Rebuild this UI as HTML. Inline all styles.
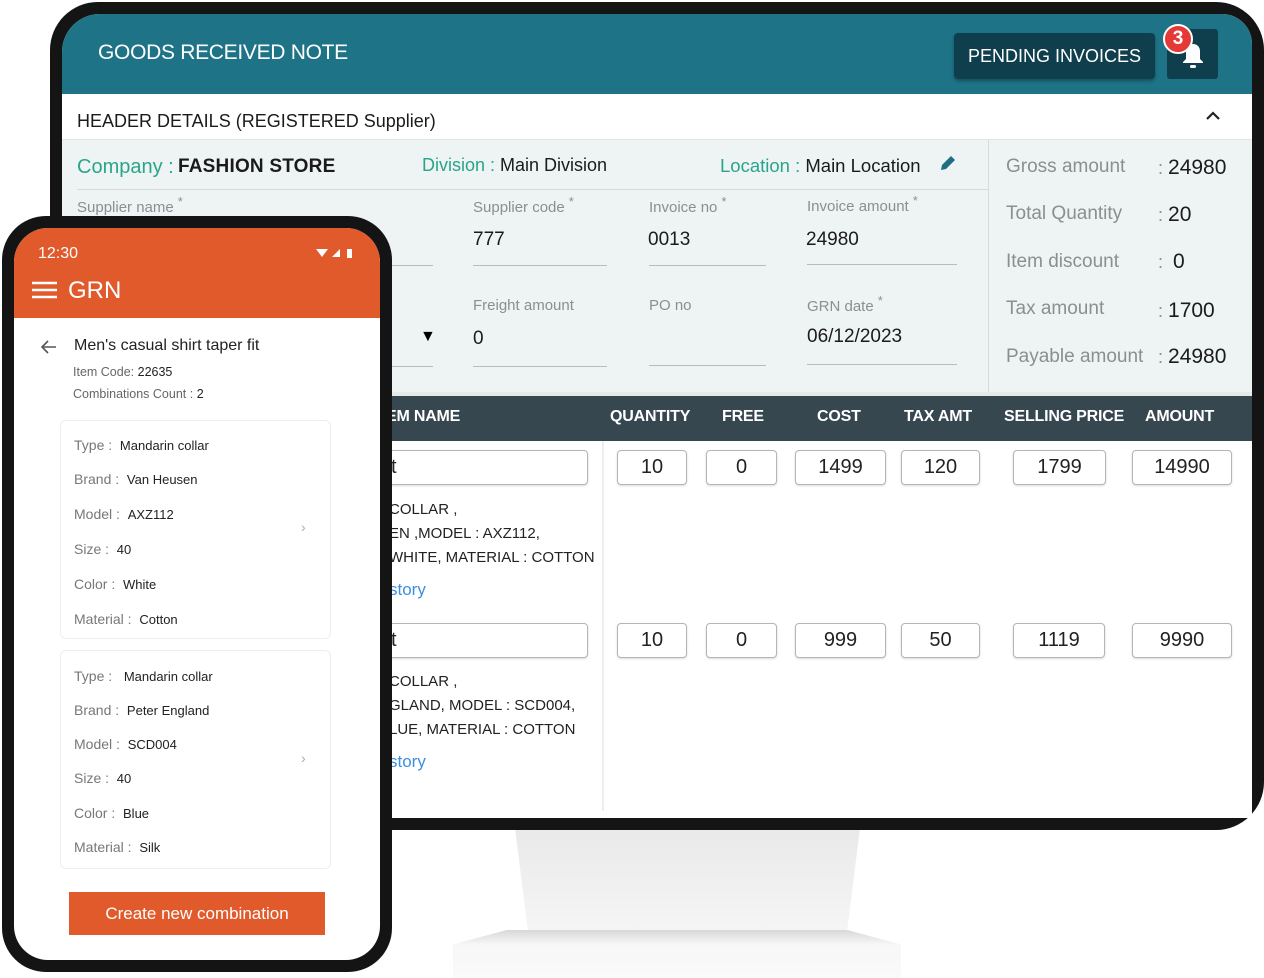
<!DOCTYPE html>
<html><head><meta charset="utf-8"><style>
*{margin:0;padding:0;box-sizing:border-box}
body{width:1264px;height:978px;background:#fff;position:relative;overflow:hidden;font-family:"Liberation Sans",sans-serif}
.a{position:absolute;white-space:nowrap}
.mon{left:50px;top:2px;width:1214px;height:828px;background:#141414;border-radius:48px}
.scr{left:62px;top:14px;width:1190px;height:804px;background:#fff;border-radius:38px 30px 0 0;overflow:hidden}
.lbl{color:#8a8f91;font-size:15px}
.val{color:#1b1b1b;font-size:19px}
.ul{height:1px;background:#b8bcbd}
.box{border:1px solid #b5b5b5;border-radius:4px;background:#fff;height:35px;font-size:20px;color:#222;display:flex;align-items:center;justify-content:center;box-shadow:0 1px 2px rgba(0,0,0,.15)}
.th{color:#fff;font-size:16px;font-weight:bold;top:394px;letter-spacing:-.2px}
.sl{color:#8a8f91;font-size:19px;left:1006px}
.sv{color:#1b1b1b;font-size:21px;left:1158px}
.ph{left:2px;top:216px;width:390px;height:756px;background:#141414;border-radius:44px}
.pscr{left:14px;top:228px;width:366px;height:732px;background:#fff;border-radius:34px;overflow:hidden}
.card{border:1px solid #eee;border-radius:6px;left:60px;width:271px}
.k{font-size:14px;color:#777;left:74px}
.k b{font-weight:normal;color:#222;font-size:13px}
</style></head><body>
<div class="a" style="left:515px;top:828px;width:345px;height:110px;background:linear-gradient(#e9e9e9,#f6f6f6);clip-path:polygon(0 0,100% 0,96% 100%,4% 100%)"></div>
<div class="a" style="left:453px;top:930px;width:448px;height:48px;background:linear-gradient(#d8d8d8,#f7f7f7 30%,#fafafa);clip-path:polygon(12% 0,88% 0,100% 30%,100% 100%,0 100%,0 30%)"></div>
<div class="a mon"></div>
<div class="a scr">
 <div class="a" style="left:0;top:0;width:1190px;height:80px;background:#1e7387"></div>
 <div class="a" style="left:36px;top:27px;color:#fff;font-size:21px;letter-spacing:-.3px">GOODS RECEIVED NOTE</div>
 <div class="a" style="left:892px;top:19px;width:201px;height:46px;background:#0f3f4d;border-radius:4px;color:#fff;font-size:18px;display:flex;align-items:center;justify-content:center;box-shadow:0 2px 3px rgba(0,0,0,.3)">PENDING INVOICES</div>
 <div class="a" style="left:1105px;top:15px;width:51px;height:50px;background:#0f3f4d;border-radius:3px"></div>
 <svg class="a" style="left:1119px;top:28px" width="24" height="28" viewBox="0 0 24 28"><path d="M12 2c-4 0-7 3-7 7v8l-3 3v1h20v-1l-3-3V9c0-4-3-7-7-7z" fill="#fff"/><rect x="9" y="23" width="6" height="3" rx="1.5" fill="#fff"/></svg>
 <div class="a" style="left:1101px;top:10px;width:30px;height:30px;border-radius:50%;background:#e53935;border:2px solid #fff;color:#fff;font-size:19px;font-weight:bold;text-align:center;line-height:26px">3</div>
 <div class="a" style="left:0;top:80px;width:1190px;height:46px;background:#fff;border-bottom:1px solid #e3e6e6"></div>
 <div class="a" style="left:15px;top:97px;font-size:18px;color:#1b1b1b">HEADER DETAILS (REGISTERED Supplier)</div>
 <svg class="a" style="left:1143px;top:96px" width="16" height="12"><path d="M2 9l6-6 6 6" stroke="#222" stroke-width="2.2" fill="none"/></svg>
 <div class="a" style="left:0;top:126px;width:1190px;height:256px;background:#eef3f3"></div>
 <div class="a" style="left:926px;top:126px;width:1px;height:252px;background:#d6dcdc"></div>
 <div class="a" style="left:0;top:378px;width:1190px;height:4px;background:#e4eaea"></div>
 <div class="a" style="left:15px;top:142px;font-size:20px;color:#2aa58b">Company :</div>
 <div class="a" style="left:116px;top:142px;font-size:19px;color:#1b1b1b;font-weight:bold;letter-spacing:.2px">FASHION STORE</div>
 <div class="a" style="left:360px;top:141px;font-size:18px;color:#2aa58b">Division : <span style="color:#1b1b1b">Main Division</span></div>
 <div class="a" style="left:658px;top:141px;font-size:18.5px;color:#2aa58b">Location : <span style="color:#1b1b1b">Main Location</span></div>
 <svg class="a" style="left:876px;top:139px" width="20" height="20"><path d="M3 17l1-5 9-9 4 4-9 9z" fill="#1e6e84"/></svg>
 <div class="a" style="left:15px;top:175px;width:911px;height:1px;background:#d6dcdc"></div>
 <div class="a lbl" style="left:15px;top:181px">Supplier name <sup>*</sup></div>
 <div class="a lbl" style="left:411px;top:181px">Supplier code <sup>*</sup></div>
 <div class="a lbl" style="left:587px;top:181px">Invoice no <sup>*</sup></div>
 <div class="a lbl" style="left:745px;top:180px">Invoice amount <sup>*</sup></div>
 <div class="a val" style="left:411px;top:215px">777</div>
 <div class="a val" style="left:586px;top:215px">0013</div>
 <div class="a val" style="left:744px;top:215px">24980</div>
 <div class="a ul" style="left:300px;top:251px;width:71px"></div>
 <div class="a ul" style="left:411px;top:251px;width:134px"></div>
 <div class="a ul" style="left:587px;top:251px;width:117px"></div>
 <div class="a ul" style="left:745px;top:250px;width:150px"></div>
 <div class="a lbl" style="left:411px;top:283px">Freight amount</div>
 <div class="a lbl" style="left:587px;top:283px">PO no</div>
 <div class="a lbl" style="left:745px;top:280px">GRN date <sup>*</sup></div>
 <div class="a val" style="left:411px;top:314px">0</div>
 <div class="a val" style="left:745px;top:312px">06/12/2023</div>
 <div class="a" style="left:358px;top:314px;font-size:16px">▼</div>
 <div class="a ul" style="left:300px;top:352px;width:71px"></div>
 <div class="a ul" style="left:411px;top:352px;width:134px"></div>
 <div class="a ul" style="left:587px;top:351px;width:117px"></div>
 <div class="a ul" style="left:745px;top:350px;width:150px"></div>
 <div class="a sl" style="left:944px;top:142px">Gross amount</div><div class="a sv" style="left:1096px;top:142px"><span style="color:#888;font-size:18px">: </span>24980</div>
 <div class="a sl" style="left:944px;top:189px">Total Quantity</div><div class="a sv" style="left:1096px;top:189px"><span style="color:#888;font-size:18px">: </span>20</div>
 <div class="a sl" style="left:944px;top:237px">Item discount</div><div class="a sv" style="left:1096px;top:236px"><span style="color:#888;font-size:18px">:&nbsp; </span>0</div>
 <div class="a sl" style="left:944px;top:284px">Tax amount</div><div class="a sv" style="left:1096px;top:285px"><span style="color:#888;font-size:18px">: </span>1700</div>
 <div class="a sl" style="left:944px;top:332px">Payable amount</div><div class="a sv" style="left:1096px;top:331px"><span style="color:#888;font-size:18px">: </span>24980</div>
 <div class="a" style="left:0;top:382px;width:1190px;height:45px;background:#37474f"></div>
 <div class="a th" style="left:324px">EM NAME</div>
 <div class="a th" style="left:548px">QUANTITY</div>
 <div class="a th" style="left:660px">FREE</div>
 <div class="a th" style="left:755px">COST</div>
 <div class="a th" style="left:842px">TAX AMT</div>
 <div class="a th" style="left:942px">SELLING PRICE</div>
 <div class="a th" style="left:1083px">AMOUNT</div>
 <div class="a" style="left:540px;top:427px;width:2px;height:370px;background:#eee"></div>
 <div class="a box" style="left:300px;top:436px;width:226px;justify-content:flex-start;padding-left:28px">t</div>
 <div class="a box" style="left:555px;top:436px;width:70px">10</div>
 <div class="a box" style="left:644px;top:436px;width:71px">0</div>
 <div class="a box" style="left:733px;top:436px;width:91px">1499</div>
 <div class="a box" style="left:839px;top:436px;width:79px">120</div>
 <div class="a box" style="left:951px;top:436px;width:93px">1799</div>
 <div class="a box" style="left:1070px;top:436px;width:100px">14990</div>
 <div class="a" style="left:327px;top:484px;font-size:15px;color:#222;line-height:24px">COLLAR ,<br>EN ,MODEL : AXZ112,<br>WHITE, MATERIAL : COTTON</div>
 <div class="a" style="left:327px;top:566px;font-size:17px;color:#3d8fe0">story</div>
 <div class="a box" style="left:300px;top:609px;width:226px;justify-content:flex-start;padding-left:28px">t</div>
 <div class="a box" style="left:555px;top:609px;width:70px">10</div>
 <div class="a box" style="left:644px;top:609px;width:71px">0</div>
 <div class="a box" style="left:733px;top:609px;width:91px">999</div>
 <div class="a box" style="left:839px;top:609px;width:79px">50</div>
 <div class="a box" style="left:951px;top:609px;width:92px">1119</div>
 <div class="a box" style="left:1070px;top:609px;width:100px">9990</div>
 <div class="a" style="left:327px;top:656px;font-size:15px;color:#222;line-height:24px">COLLAR ,<br>GLAND, MODEL : SCD004,<br>LUE, MATERIAL : COTTON</div>
 <div class="a" style="left:327px;top:738px;font-size:17px;color:#3d8fe0">story</div>
</div>
<div class="a ph"></div>
<div class="a pscr">
 <div class="a" style="left:0;top:0;width:366px;height:90px;background:#e05a2c"></div>
 <div class="a" style="left:24px;top:17px;color:#fff;font-size:16px">12:30</div>
 <svg class="a" style="left:302px;top:20px" width="38" height="12"><path d="M0 1h12l-6 8z" fill="#fff"/><path d="M16 9l8-8v8z" fill="#fff"/><rect x="31" y="1" width="5" height="9" fill="#fff"/></svg>
 <svg class="a" style="left:18px;top:53px" width="26" height="18"><path d="M0 2h25M0 9h25M0 16h25" stroke="#fff" stroke-width="2.5"/></svg>
 <div class="a" style="left:54px;top:49px;color:#fff;font-size:24px">GRN</div>
 <svg class="a" style="left:27px;top:112px" width="16" height="14"><path d="M15 7H2M7 1L1 7l6 6" stroke="#555" stroke-width="1.6" fill="none"/></svg>
 <div class="a" style="left:60px;top:109px;font-size:16px;color:#222">Men's casual shirt taper fit</div>
 <div class="a" style="left:59px;top:137px;font-size:12.5px;color:#666">Item Code: <span style="color:#222">22635</span></div>
 <div class="a" style="left:59px;top:159px;font-size:12.5px;color:#666">Combinations Count : <span style="color:#222">2</span></div>
</div>
<div class="a card" style="top:420px;height:219px"></div>
<div class="a k" style="top:437px">Type :&nbsp; <b>Mandarin collar</b></div>
<div class="a k" style="top:471px">Brand :&nbsp; <b>Van Heusen</b></div>
<div class="a k" style="top:506px">Model :&nbsp; <b>AXZ112</b></div>
<div class="a k" style="top:541px">Size :&nbsp; <b>40</b></div>
<div class="a k" style="top:576px">Color :&nbsp; <b>White</b></div>
<div class="a k" style="top:611px">Material :&nbsp; <b>Cotton</b></div>
<div class="a" style="left:301px;top:519px;color:#aaa;font-size:14px">›</div>
<div class="a card" style="top:650px;height:219px"></div>
<div class="a k" style="top:668px">Type :&nbsp;&nbsp; <b>Mandarin collar</b></div>
<div class="a k" style="top:702px">Brand :&nbsp; <b>Peter England</b></div>
<div class="a k" style="top:736px">Model :&nbsp; <b>SCD004</b></div>
<div class="a k" style="top:770px">Size :&nbsp; <b>40</b></div>
<div class="a k" style="top:805px">Color :&nbsp; <b>Blue</b></div>
<div class="a k" style="top:839px">Material :&nbsp; <b>Silk</b></div>
<div class="a" style="left:301px;top:750px;color:#aaa;font-size:14px">›</div>
<div class="a" style="left:69px;top:892px;width:256px;height:43px;background:#e05a2c;color:#fff;font-size:17px;display:flex;align-items:center;justify-content:center">Create new combination</div>
</body></html>
